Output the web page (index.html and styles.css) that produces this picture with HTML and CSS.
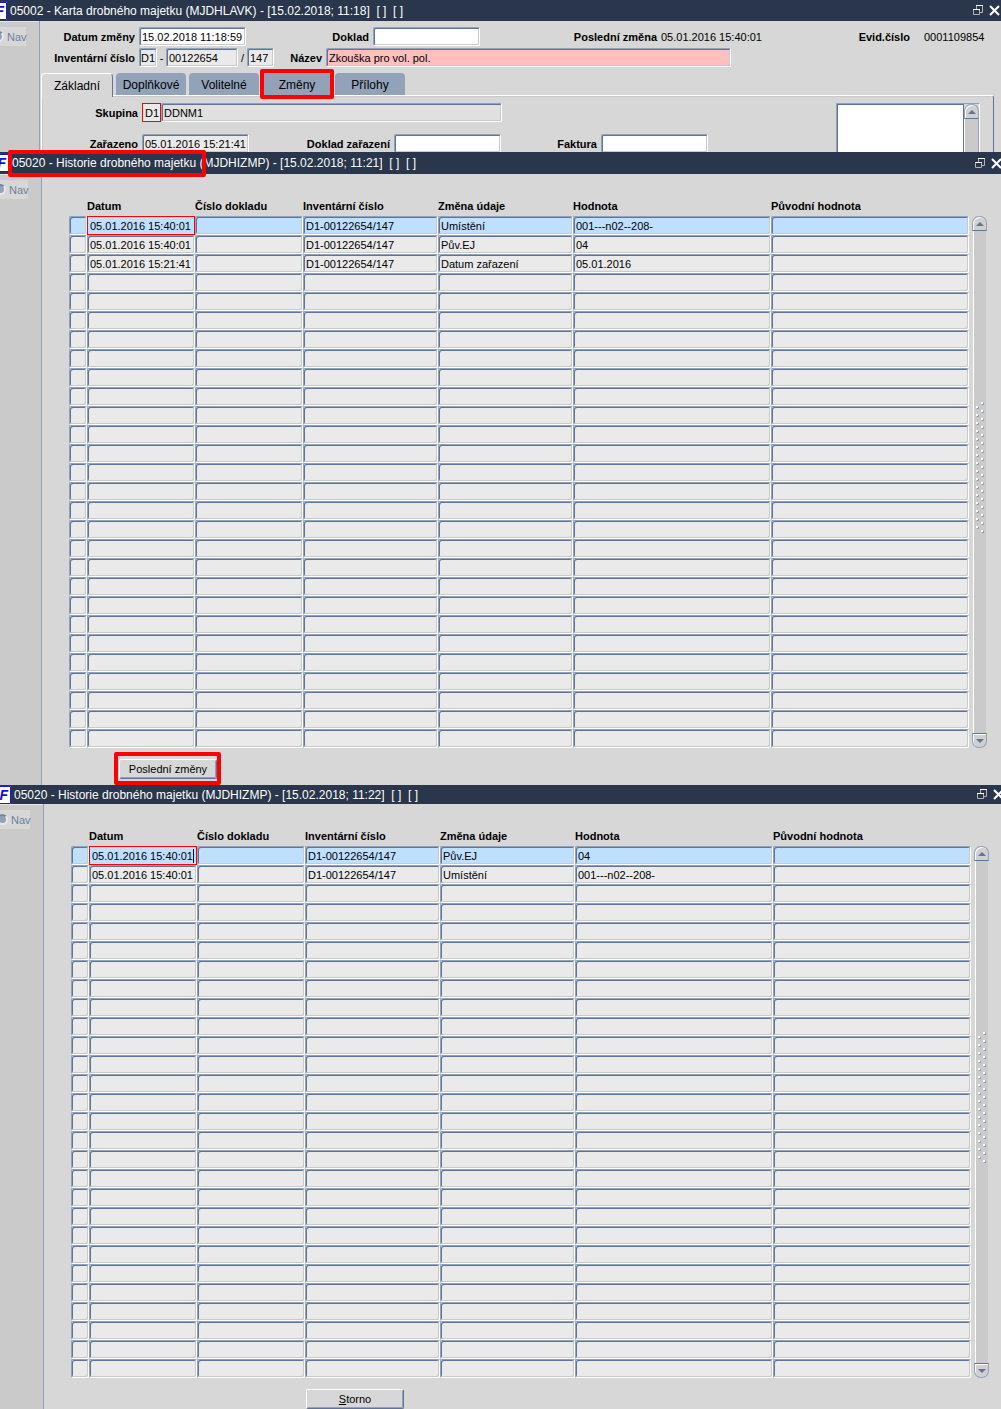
FILE: index.html
```html
<!DOCTYPE html>
<html lang="cs">
<head>
  <meta charset="UTF-8">
  <meta name="viewport" content="width=device-width, initial-scale=1.0">
  <title>Karta drobného majetku</title>
  <link rel="stylesheet" href="styles.css">
</head>
<body>

<!-- Karta majetku -->
<section class="window window-card">
  <header class="titlebar">
    <svg class="logo" viewBox="0 0 18 18" preserveAspectRatio="xMaxYMid slice">
      <rect x="0" y="0" width="18" height="18" fill="#fff"/>
      <path d="M0 .5h17.500v17H0" fill="none" stroke="#1a1ad0"/>
      <text x="15" y="14" text-anchor="end">F</text>
    </svg>
    <h1 class="title">05002 - Karta drobného majetku (MJDHLAVK) - [15.02.2018; 11:18]&nbsp; [ ]&nbsp; [ ]</h1>
    <button class="win-btn" aria-label="Obnovit">
      <svg width="11" height="11" viewBox="0 0 11 11"><path d="M3.500 1v3M9.500 1v6.500H7M.5 5v4.500h6V5" fill="none" stroke="#b4b4b0"/><path d="M3 .5h7M0 4.500h7" stroke="#fff"/></svg>
    </button>
    <button class="win-btn" aria-label="Zavřít">
      <svg width="11" height="11" viewBox="0 0 11 11"><path d="M1 1l9 9M10 1l-9 9" stroke="#fff" stroke-width="2"/></svg>
    </button>
  </header>
  <div class="window-body">
    <aside class="sidebar">
      <label class="nav-option"><input type="radio" name="nav1" disabled>Nav</label>
    </aside>
    <main class="card">
      <div class="row">
        <label class="label label-first" for="datum">Datum změny</label>
        <input class="field w-date" id="datum" value="15.02.2018 11:18:59">
        <label class="label label-doklad" for="doklad">Doklad</label>
        <input class="field w-date" id="doklad">
        <span class="label label-change">Poslední změna</span>
        <span class="value">05.01.2016 15:40:01</span>
        <span class="label label-evid">Evid.číslo</span>
        <span class="value value-evid">0001109854</span>
      </div>
      <div class="row">
        <label class="label label-first" for="inv">Inventární číslo</label>
        <input class="field readonly w-code" id="inv" value="D1" readonly>
        <span class="sep">-</span>
        <input class="field readonly w-number" aria-label="Číslo" value="00122654" readonly>
        <span class="sep">/</span>
        <input class="field readonly w-sub" aria-label="Podčíslo" value="147" readonly>
        <label class="label label-name" for="nazev">Název</label>
        <input class="field required w-name" id="nazev" value="Zkouška pro vol. pol.">
      </div>
      <nav class="tabs">
        <button class="tab active">Základní</button>
        <button class="tab">Doplňkové</button>
        <button class="tab">Volitelné</button>
        <button class="tab marked">Změny</button>
        <button class="tab">Přílohy</button>
      </nav>
      <div class="pane">
        <div class="pane-form">
          <div class="row">
            <label class="label label-pane" for="skupina">Skupina</label>
            <input class="field focused w-group" id="skupina" value="D1">
            <input class="field disabled w-groupname" aria-label="Název skupiny" value="DDNM1" readonly>
          </div>
          <div class="row">
            <label class="label label-pane" for="zarazeno">Zařazeno</label>
            <input class="field readonly w-date" id="zarazeno" value="05.01.2016 15:21:41" readonly>
            <label class="label label-dz" for="dz">Doklad zařazení</label>
            <input class="field w-date" id="dz">
            <label class="label label-faktura" for="faktura">Faktura</label>
            <input class="field w-date" id="faktura">
          </div>
        </div>
        <div class="note">
          <textarea class="note-text" aria-label="Poznámka"></textarea>
          <div class="scrollbar">
            <button class="scroll-btn up" aria-label="Nahoru"></button>
            <div class="track"></div>
          </div>
        </div>
      </div>
    </main>
  </div>
</section>

<!-- Historie, všechny změny -->
<section class="window window-history">
  <header class="titlebar">
    <svg class="logo" viewBox="0 0 18 18" preserveAspectRatio="xMaxYMid slice">
      <rect x="0" y="0" width="18" height="18" fill="#fff"/>
      <path d="M0 .5h17.500v17H0" fill="none" stroke="#1a1ad0"/>
      <text x="15" y="14" text-anchor="end">iF</text>
    </svg>
    <h2 class="title"><span class="marked">05020 - Historie drobného majetku</span> (MJDHIZMP) - [15.02.2018; 11:21]&nbsp; [ ]&nbsp; [ ]</h2>
    <button class="win-btn" aria-label="Obnovit">
      <svg width="11" height="11" viewBox="0 0 11 11"><path d="M3.500 1v3M9.500 1v6.500H7M.5 5v4.500h6V5" fill="none" stroke="#b4b4b0"/><path d="M3 .5h7M0 4.500h7" stroke="#fff"/></svg>
    </button>
    <button class="win-btn" aria-label="Zavřít">
      <svg width="11" height="11" viewBox="0 0 11 11"><path d="M1 1l9 9M10 1l-9 9" stroke="#fff" stroke-width="2"/></svg>
    </button>
  </header>
  <div class="window-body">
    <aside class="sidebar">
      <label class="nav-option"><input type="radio" name="nav2" disabled>Nav</label>
    </aside>
    <main class="history">
      <div class="grid-area">
        <div class="grid-wrap">
          <table class="grid">
            <colgroup>
              <col class="c-mark"><col class="c-date"><col class="c-date"><col class="c-inv"><col class="c-inv"><col><col>
            </colgroup>
            <thead>
              <tr><th></th><th>Datum</th><th>Číslo dokladu</th><th>Inventární číslo</th><th>Změna údaje</th><th>Hodnota</th><th>Původní hodnota</th></tr>
            </thead>
            <tbody>
              <tr class="current"><td></td><td class="cell-focus"><input aria-label="Datum" value="05.01.2016 15:40:01"></td><td></td><td>D1-00122654/147</td><td>Umístění</td><td>001---n02--208-</td><td></td></tr>
              <tr><td></td><td>05.01.2016 15:40:01</td><td></td><td>D1-00122654/147</td><td>Pův.EJ</td><td>04</td><td></td></tr>
              <tr><td></td><td>05.01.2016 15:21:41</td><td></td><td>D1-00122654/147</td><td>Datum zařazení</td><td>05.01.2016</td><td></td></tr>
            </tbody>
          </table>
        </div>
        <div class="scrollbar">
          <button class="scroll-btn up" aria-label="Nahoru"></button>
          <div class="track">
            <svg class="grip" width="10" height="132">
              <pattern id="dots1" width="10" height="8" patternUnits="userSpaceOnUse">
                <path d="M6 1h3v2H7zM1 5h3v2H2z" fill="#92a3b9"/>
                <path d="M6 0h2v2H6zM1 4h2v2H1z" fill="#fff"/>
              </pattern>
              <rect width="10" height="132" fill="url(#dots1)"/>
            </svg>
          </div>
          <button class="scroll-btn down" aria-label="Dolů"></button>
        </div>
      </div>
      <div class="actions">
        <button class="action marked">Poslední změny</button>
      </div>
    </main>
  </div>
</section>

<!-- Historie, poslední změny -->
<section class="window window-last">
  <header class="titlebar">
    <svg class="logo" viewBox="0 0 18 18" preserveAspectRatio="xMaxYMid slice">
      <rect x="0" y="0" width="18" height="18" fill="#fff"/>
      <path d="M0 .5h17.500v17H0" fill="none" stroke="#1a1ad0"/>
      <text x="15" y="14" text-anchor="end">iF</text>
    </svg>
    <h2 class="title">05020 - Historie drobného majetku (MJDHIZMP) - [15.02.2018; 11:22]&nbsp; [ ]&nbsp; [ ]</h2>
    <button class="win-btn" aria-label="Obnovit">
      <svg width="11" height="11" viewBox="0 0 11 11"><path d="M3.500 1v3M9.500 1v6.500H7M.5 5v4.500h6V5" fill="none" stroke="#b4b4b0"/><path d="M3 .5h7M0 4.500h7" stroke="#fff"/></svg>
    </button>
    <button class="win-btn" aria-label="Zavřít">
      <svg width="11" height="11" viewBox="0 0 11 11"><path d="M1 1l9 9M10 1l-9 9" stroke="#fff" stroke-width="2"/></svg>
    </button>
  </header>
  <div class="window-body">
    <aside class="sidebar">
      <label class="nav-option"><input type="radio" name="nav3" disabled>Nav</label>
    </aside>
    <main class="history">
      <div class="grid-area">
        <div class="grid-wrap">
          <table class="grid">
            <colgroup>
              <col class="c-mark"><col class="c-date"><col class="c-date"><col class="c-inv"><col class="c-inv"><col><col>
            </colgroup>
            <thead>
              <tr><th></th><th>Datum</th><th>Číslo dokladu</th><th>Inventární číslo</th><th>Změna údaje</th><th>Hodnota</th><th>Původní hodnota</th></tr>
            </thead>
            <tbody>
              <tr class="current"><td></td><td class="cell-focus"><div class="edit"><input aria-label="Datum" value="05.01.2016 15:40:01"><span class="caret"></span></div></td><td></td><td>D1-00122654/147</td><td>Pův.EJ</td><td>04</td><td></td></tr>
              <tr><td></td><td>05.01.2016 15:40:01</td><td></td><td>D1-00122654/147</td><td>Umístění</td><td>001---n02--208-</td><td></td></tr>
            </tbody>
          </table>
        </div>
        <div class="scrollbar">
          <button class="scroll-btn up" aria-label="Nahoru"></button>
          <div class="track">
            <svg class="grip" width="10" height="132">
              <pattern id="dots2" width="10" height="8" patternUnits="userSpaceOnUse">
                <path d="M6 1h3v2H7zM1 5h3v2H2z" fill="#92a3b9"/>
                <path d="M6 0h2v2H6zM1 4h2v2H1z" fill="#fff"/>
              </pattern>
              <rect width="10" height="132" fill="url(#dots2)"/>
            </svg>
          </div>
          <button class="scroll-btn down" aria-label="Dolů"></button>
        </div>
      </div>
      <div class="actions">
        <button class="action"><u>S</u>torno</button>
      </div>
    </main>
  </div>
</section>

<script src="script.js"></script>
</body>
</html>
```

FILE: styles.css
```css
* {
  box-sizing: border-box;
}
body {
  margin: 0;
  overflow-x: hidden;
  background-color: #d7d7d7;
  color: #000;
  font-family: "Liberation Sans", Arial, sans-serif;
  font-size: 11px;
}
input, button, textarea {
  font: inherit;
  color: inherit;
}

/* windows: each one sits a bit further to the right */
.window {
  --shift: 0px;
  margin-right: calc(0px - var(--shift));
}
.window-history {
  --shift: 2px;
}
.window-last {
  --shift: 4px;
}
.window-body {
  display: flex;
}
.titlebar {
  position: relative;
  display: flex;
  align-items: center;
  height: 21px;
  padding-right: 1px;
  background-color: #29364b;
  color: #fff;
}
.window-history .titlebar {
  height: 22px;
}
.window-last .titlebar {
  height: 19px;
}
.logo {
  width: calc(7px + var(--shift));
  height: 18px;
  margin-right: 3px;
}
.logo text {
  font-size: 14px;
  font-weight: bold;
  font-style: italic;
  fill: #1010d0;
}
.title {
  flex: 1;
  margin: 0;
  font-size: 12px;
  font-weight: normal;
  white-space: nowrap;
}
.win-btn {
  display: flex;
  width: 11px;
  height: 11px;
  margin-left: 5px;
  padding: 0;
  border: 0;
  background: none;
}

.sidebar {
  width: calc(40px + var(--shift));
  flex: none;
  padding-top: 6px;
  border-right: 1px solid #92a3b9;
  background-color: #cacaca;
  box-shadow: inset 0 1px #e4e4e4;
  overflow: hidden;
}
.nav-option {
  display: flex;
  align-items: center;
  width: 33px;
  height: 19px;
  margin-left: calc(var(--shift) - 7px);
  gap: 3px;
  background-color: #d7d7d7;
  color: #6b7f9f;
}
.nav-option input {
  appearance: none;
  flex: none;
  width: 11px;
  height: 11px;
  margin: 0;
  border: 2px solid #e8e8e8;
  border-top-color: #76879f;
  border-radius: 50%;
  background-color: #92a3b9;
}

/* red frames around the important places */
.marked {
  position: relative;
}
.marked::after {
  content: "";
  position: absolute;
  z-index: 2;
  inset: -4px -2px;
  border: 4px solid #f00;
  border-radius: 2px;
}
.title .marked::after {
  inset: -6px -10px -7px -4px;
}
.action.marked::after {
  inset: -8px -5px -7px -6px;
}

/* card */
.card {
  flex: 1;
  min-width: 0;
  padding-top: 6px;
}
.row {
  display: flex;
  align-items: center;
  height: 19px;
  margin-bottom: 2px;
}
.label {
  flex: none;
  padding-right: 4px;
  font-weight: bold;
  text-align: right;
  white-space: nowrap;
}
.label-first {
  width: 99px;
}
.label-doklad {
  width: 127px;
}
.label-change {
  width: 181px;
}
.label-evid {
  width: 153px;
}
.label-name {
  width: 52px;
}
.label-pane, .label-faktura {
  width: 100px;
}
.label-dz {
  width: 145px;
}
.value {
  flex: none;
  width: 100px;
  white-space: nowrap;
}
.value-evid {
  width: 72px;
  padding-left: 10px;
}
.sep {
  width: 9px;
  text-align: center;
}
.field {
  flex: none;
  height: 19px;
  padding: 0 0 0 2px;
  border: 1px solid #fff;
  border-top-color: #92a3b9;
  border-left-color: #92a3b9;
  border-radius: 2px;
  background-color: #fff;
  box-shadow: inset 1px 1px #5f7499, inset -1px -1px #cacaca;
  outline: 0;
}
.readonly {
  background-color: #eaeaea;
}
.disabled {
  background-color: #e0e0e0;
}
.required {
  background-color: #ffbfbf;
}
.focused {
  border-color: #f00;
  border-radius: 0;
  background-color: #eaeaea;
  box-shadow: none;
}
.w-date {
  width: 107px;
}
.w-code {
  width: 18px;
  padding-left: 1px;
}
.w-group {
  width: 19px;
}
.w-number {
  width: 72px;
}
.w-sub {
  width: 27px;
}
.w-name {
  width: 405px;
}
.w-groupname {
  width: 341px;
}

.tabs {
  display: flex;
  gap: 3px;
  margin: 6px 0 0 1px;
}
.tab {
  width: 70px;
  height: 22px;
  padding: 2px 0 0;
  border: 0;
  border-radius: 4px 4px 0 0;
  background-color: #92a3b9;
  font-size: 12px;
}
.tab.active {
  position: relative;
  width: 72px;
  height: 24px;
  margin-bottom: -2px;
  padding-bottom: 2px;
  border-top: 1px solid #fff;
  border-left: 1px solid #fff;
  border-right: 1px solid #5f7499;
  background-color: #d7d7d7;
}
.pane {
  display: flex;
  justify-content: space-between;
  margin: 0 7px 0 1px;
  padding: 7px 13px 0 0;
  border-top: 1px solid #fff;
  border-left: 1px solid #fff;
  border-right: 1px solid #5f7499;
  border-top-right-radius: 3px;
  box-shadow: inset 1px 1px #cacaca;
}
.pane .row {
  margin-bottom: 12px;
}
.pane .row:last-child {
  margin-bottom: -1px;
}
.note {
  display: flex;
  width: 144px;
  border-top: 1px solid #92a3b9;
  border-left: 1px solid #92a3b9;
  border-right: 1px solid #fff;
}
.note-text {
  flex: 1;
  min-width: 0;
  height: 0;
  min-height: 100%;
  border: 1px solid #5f7499;
  border-bottom: 0;
  background-color: #fff;
  resize: none;
}

/* scrollbar */
.scrollbar {
  display: flex;
  flex-direction: column;
  flex: none;
  width: 15px;
}
.scroll-btn {
  display: flex;
  align-items: center;
  justify-content: center;
  height: 15px;
  padding: 0;
  border: 1px solid #92a3b9;
  background-color: #d0d0d0;
  box-shadow: inset 1px 1px #fff;
}
.scroll-btn.up {
  border-bottom-color: #5f7499;
  border-radius: 7px 7px 0 0;
}
.scroll-btn.down {
  border-top-color: #5f7499;
  border-radius: 0 0 7px 7px;
}
.scroll-btn::before {
  content: "";
  border: 4px solid transparent;
}
.up::before {
  border-top-width: 0;
  border-bottom-color: #5f7499;
}
.down::before {
  border-bottom-width: 0;
  border-top-color: #5f7499;
}
.track {
  display: flex;
  align-items: center;
  flex: 1;
  margin: 0 1px;
  padding: 0 0 28px 1px;
  border-left: 1px solid #fff;
  background-color: #cacaca;
}
.note .track {
  margin: 0;
  padding: 0;
  border-right: 1px solid #92a3b9;
}

/* history grid */
.history {
  flex: 1;
  min-width: 0;
  padding: 21px 16px 0 27px;
}
.grid-area {
  display: flex;
  gap: 3px;
}
.grid-area .scrollbar {
  margin-top: 21px;
}
.grid-wrap {
  flex: 1;
}
.grid {
  width: 100%;
  table-layout: fixed;
  border-collapse: separate;
  border-spacing: 0;
}
.c-mark {
  width: 18px;
}
.c-date {
  width: 108px;
}
.c-inv {
  width: 135px;
}
.grid th {
  height: 21px;
  padding: 0;
  text-align: left;
  white-space: nowrap;
}
.grid td {
  height: 19px;
  padding: 0 2px;
  border: 1px solid #fff;
  border-top-color: #92a3b9;
  border-left-color: #92a3b9;
  border-radius: 2px;
  background-color: #eaeaea;
  box-shadow: inset 1px 1px #5f7499, inset -1px -1px #cacaca;
  line-height: 16px;
  white-space: nowrap;
  overflow: hidden;
}
.grid .current td {
  background-color: #bfdfff;
}
.grid .cell-focus {
  border-color: #f00;
  border-radius: 0;
  box-shadow: none;
}
.cell-focus input {
  display: block;
  width: 101px;
  height: 16px;
  padding: 0;
  border: 0;
  background: none;
  outline: 0;
}
.edit {
  display: flex;
  align-items: center;
}
.caret {
  flex: none;
  width: 1px;
  height: 14px;
  background-color: #000;
}

.actions {
  display: flex;
  padding: 11px 0 6px 50px;
}
.window-last .actions {
  padding: 11px 0 0 235px;
}
.action {
  width: 98px;
  height: 20px;
  padding: 0;
  border: 1px solid #fff;
  border-right-color: #5f7499;
  border-bottom-color: #5f7499;
  border-radius: 2px;
  background-color: #d7d7d7;
  box-shadow: inset -1px -1px #92a3b9;
}
```

FILE: script.js
```js
// Doplní prázdné řádky do 28
document.querySelectorAll('.grid tbody').forEach(body => {
  while (body.rows.length < 28) {
    const row = body.insertRow();
    for (let i = 0; i < 7; i++) {
      row.insertCell();
    }
  }
});
```
